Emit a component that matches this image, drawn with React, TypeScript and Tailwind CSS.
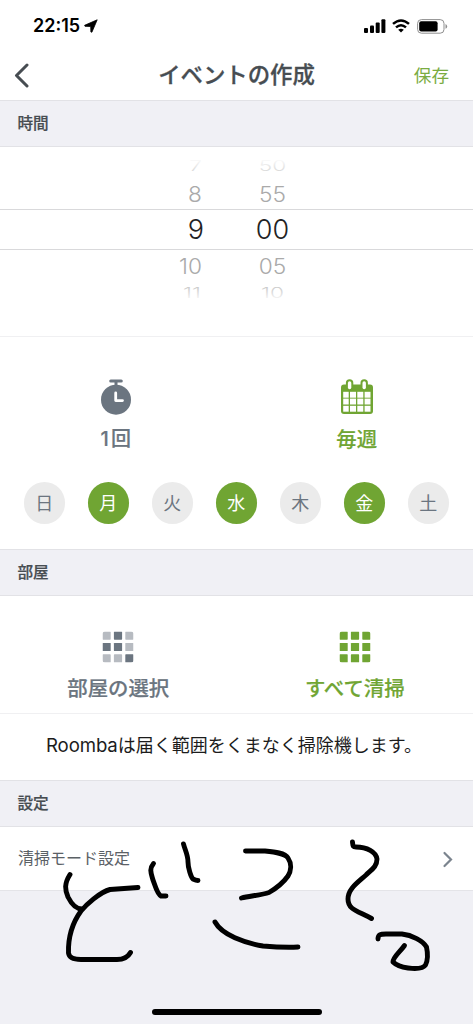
import clsx from 'clsx';

const hours = ['7', '8', '9', '10', '11'];
const minutes = ['50', '55', '00', '05', '10'];

const wheelRows = [
  { height: 'h-[26px]', text: 'text-[22px] text-[#c4c4c4] scale-y-[0.64] scale-x-[1.03]', fade: 'bg-linear-to-b from-white from-20% to-white/0 to-100%', hourPad: 'pr-[5px]' },
  { height: 'h-[30px]', text: 'text-[22px] text-[#aaaaaa] scale-y-[0.95] scale-x-[1.03]', fade: '', hourPad: 'pr-[5px]' },
  { height: 'h-[41px] border-y border-[#d9d9db]', text: 'text-[27px] text-[#222224]', fade: '', hourPad: 'pr-0' },
  { height: 'h-8', text: 'text-[22px] text-[#aaaaaa] scale-y-[0.95] scale-x-[1.03]', fade: '', hourPad: 'pr-[5px]' },
  { height: 'h-[22px]', text: 'text-[22px] text-[#b8b8b8] scale-y-[0.64] scale-x-[1.03]', fade: 'bg-linear-to-t from-white from-10% to-white/0 to-100%', hourPad: 'pr-[6px]' },
];

const days = [
  { label: '日', active: false },
  { label: '月', active: true },
  { label: '火', active: false },
  { label: '水', active: true },
  { label: '木', active: false },
  { label: '金', active: true },
  { label: '土', active: false },
];

function StatusBar() {
  return (
    <div className="h-[50px] flex items-center justify-between pl-[33px] pr-[25px] pt-[2px]">
      <div className="flex items-center gap-[4px]">
        <span className="font-['Inter'] font-semibold text-[18px] leading-none text-black">22:15</span>
        <svg width="14" height="14" viewBox="0 0 14 14" className="-mt-px">
          <path d="M13.2 0.8 L0.6 6.3 L1 7.3 L6.7 7.5 L6.9 13 L7.9 13.2 Z" fill="#000" stroke="#000" strokeWidth="0.8" strokeLinejoin="round" />
        </svg>
      </div>
      <div className="flex items-center">
        <svg width="22" height="14" viewBox="0 0 22 14">
          <rect x="0" y="9" width="4" height="5" rx="1" />
          <rect x="6" y="6.5" width="4" height="7.5" rx="1" />
          <rect x="11.7" y="3.5" width="4" height="10.5" rx="1" />
          <rect x="17.4" y="0.3" width="4" height="13.7" rx="1" />
        </svg>
        <svg width="18" height="14" viewBox="0 0 18 14" className="ml-[6px]" fill="none" stroke="#000" strokeWidth="2.5">
          <path d="M1 4.9 Q9 -2 17 4.9" />
          <path d="M4 8.4 Q9 4 14 8.4" />
          <path d="M9 13.6 L6.2 10.8 Q9 8.7 11.8 10.8 Z" fill="#000" stroke="none" />
        </svg>
        <svg width="31" height="15" viewBox="0 0 31 15" className="ml-[7px]">
          <rect x="0.6" y="0.6" width="26.4" height="13.6" rx="3.8" fill="none" stroke="#8f8f8f" />
          <rect x="2.2" y="2.2" width="18.4" height="10.4" rx="2" />
          <path d="M28.5 5 Q30.2 5.7 30.2 7.4 Q30.2 9.1 28.5 9.8 Z" fill="#8f8f8f" />
        </svg>
      </div>
    </div>
  );
}

function SectionTitle({ title }: { title: string }) {
  return (
    <div className="h-[47px] shrink-0 flex items-center bg-[#f0f0f5] border-y border-[#e2e2e6] pl-[17.5px] pb-[2px]">
      <h2 className="text-[15.6px] leading-none font-medium [-webkit-text-stroke:0.2px] text-[#474d52]">{title}</h2>
    </div>
  );
}

function TimePicker() {
  return (
    <div className="h-[190px] pt-[6px] border-b border-[#f0f0f2] font-['Inter'] font-light">
      {wheelRows.map((row, i) => (
        <div key={i} className={clsx('relative flex items-center', row.height)}>
          <div className={clsx('w-[204px] text-right leading-none', row.text, row.hourPad)}>{hours[i]}</div>
          <div className={clsx('ml-[44px] w-[49px] text-center leading-none', row.text)}>{minutes[i]}</div>
          {row.fade && <div className={clsx('absolute inset-0', row.fade)} />}
        </div>
      ))}
    </div>
  );
}

function StopwatchIcon() {
  return (
    <svg width="32" height="37" viewBox="0 0 32 37">
      <circle cx="16" cy="20.7" r="15" fill="#6b7580" />
      <path d="M10.7 2 H21.3 M16 2 V8" stroke="#6b7580" strokeWidth="3" strokeLinecap="round" />
      <path d="M15.7 14 V21.6 H22.5" fill="none" stroke="#fff" strokeWidth="2.8" strokeLinecap="round" strokeLinejoin="round" />
    </svg>
  );
}

function CalendarIcon() {
  return (
    <svg width="34" height="37" viewBox="0 0 34 37">
      <rect x="1" y="5.5" width="32" height="29.5" rx="3" fill="#70a533" />
      {[12.8, 19.6, 26.8].map((y) => (
        <g key={y} fill="#fff">
          <rect x="3.2" y={y} width="5.5" height="5.9" />
          <rect x="10" y={y} width="6" height="5.9" />
          <rect x="17.3" y={y} width="6" height="5.9" />
          <rect x="24.6" y={y} width="5.9" height="5.9" />
        </g>
      ))}
      {[9.6, 24.2].map((x) => (
        <g key={x}>
          <rect x={x - 3.7} y="0.2" width="7.4" height="11" rx="3.7" fill="#70a533" />
          <rect x={x - 1.7} y="2.2" width="3.4" height="8" rx="1.7" fill="#fff" />
        </g>
      ))}
    </svg>
  );
}

function RoomGridIcon({ colors }: { colors: string[] }) {
  return (
    <svg width="32" height="32" viewBox="0 0 32 32">
      <defs>
        <clipPath id="grid-corners">
          <rect x="0.5" y="0.5" width="31" height="31" rx="2.5" />
        </clipPath>
      </defs>
      <g clipPath="url(#grid-corners)">
        {colors.map((color, i) => (
          <rect key={i} x={0.5 + (i % 3) * 11.4} y={0.5 + Math.floor(i / 3) * 11.4} width="8.2" height="8.2" rx="0.6" fill={color} />
        ))}
      </g>
    </svg>
  );
}

// Pen strokes written over the lower part of the screen
function Handwriting() {
  return (
    <svg
      className="absolute left-0 top-[830px] pointer-events-none"
      width="473"
      height="150"
      viewBox="0 830 473 150"
      fill="none"
      stroke="#000"
      strokeWidth="4.9"
      strokeLinecap="round"
      strokeLinejoin="round"
    >
      <path d="M70 874.5 C64 884 65 890 68 897 C72 905 76 909 82 909" />
      <path d="M138 887.5 L110 889.5 C100 892 86 905 81 911 C73 922 68 936 68.5 953 C69 957 73 959.5 81 959.5 H117 C124 959.5 128 957 130.5 952.5" />
      <path d="M153.5 863.5 C149 869 151 873 153 880 C155 885 157 894 161 896 L166 896" />
      <path d="M183.5 844 C185 850 188 855 188 862 C188 868 191 877 193 879 C195 880 197 880.5 198 880.5" />
      <path d="M245.5 851 H265 C275 852 285 853 288 858 C292 864 291 871 288 876 C283 883 275 889 269 892.5 C262 895 249 896 241.5 898" />
      <path d="M215 922 C222 935 245 943 263 946 C275 947 286 947.5 298 947" />
      <path d="M352.5 842 C353 846 352.5 847 356 847 C367 847 376 852 377 859 C377 867 371 870 366 875 C357 883 348 889 348 899 C348 910 358 911 371.5 918.5" />
      <path d="M378 939 C378 934.5 380 934 386 934 H402 C412 935 423 941 426.5 947 C428 954 427.5 961 425.5 965 C423 969 416 969 408 968 C401 967 396 965 393 962 C393 957 400 952 404.5 945.5" />
    </svg>
  );
}

export default function App() {
  const dark = '#6b7580';
  const light = '#b7bbc1';
  const green = '#70a533';

  return (
    <div className="relative w-[473px] h-[1024px] overflow-hidden bg-[#f0f0f5] flex flex-col font-['Noto_Sans_CJK_JP',sans-serif]">
      <div className="h-[100px] shrink-0 bg-white">
        <StatusBar />
        <header className="h-[50px] grid grid-cols-[1fr_auto_1fr] items-center">
          <svg width="18" height="26" viewBox="0 0 18 26" className="ml-[13px]" fill="none" stroke="#474d52" strokeWidth="3" strokeLinecap="round" strokeLinejoin="round">
            <path d="M14 3 L3.5 13.5 L14 24" />
          </svg>
          <h1 className="text-[22.4px] leading-none font-medium [-webkit-text-stroke:0.3px] text-[#474d52] pb-[3px]">イベントの作成</h1>
          <button className="justify-self-end mr-6 pb-px text-[17.6px] leading-none text-[#7aac42]">保存</button>
        </header>
      </div>

      <SectionTitle title="時間" />
      <div className="h-[402px] shrink-0 bg-white">
        <TimePicker />
        <div className="h-[117px] grid grid-cols-2 pt-[42px]">
          <div className="flex flex-col items-center gap-[12px] pr-[5px]">
            <StopwatchIcon />
            <span className="text-[20px] leading-none font-medium [-webkit-text-stroke:0.2px] text-[#6b7580]">
              <span className="font-['Inter'] mr-[2px]">1</span>回
            </span>
          </div>
          <div className="flex flex-col items-center gap-[12px] pl-[4px]">
            <CalendarIcon />
            <span className="text-[20.4px] leading-none font-medium [-webkit-text-stroke:0.2px] text-[#70a533]">毎週</span>
          </div>
        </div>
        <div className="flex justify-between pl-[23.5px] pr-[24px] pt-[28px]">
          {days.map((day) => (
            <div
              key={day.label}
              className={clsx(
                'size-[41.5px] rounded-full flex items-center justify-center text-[18px] leading-none pb-[2px]',
                day.active ? 'bg-[#70a533] text-white' : 'bg-[#ebebeb] text-[#6b7580]'
              )}
            >
              {day.label}
            </div>
          ))}
        </div>
      </div>

      <SectionTitle title="部屋" />
      <div className="h-[184px] shrink-0 bg-white">
        <div className="h-[118px] grid grid-cols-2 pt-[35px] border-b border-[#f0f0f2]">
          <div className="flex flex-col items-center gap-[14px]">
            <RoomGridIcon colors={[light, dark, light, dark, dark, light, light, light, dark]} />
            <span className="text-[20.4px] leading-none font-medium [-webkit-text-stroke:0.2px] text-[#6b7580]">部屋の選択</span>
          </div>
          <div className="flex flex-col items-center gap-[14px]">
            <RoomGridIcon colors={Array(9).fill(green)} />
            <span className="text-[20.4px] leading-none font-medium [-webkit-text-stroke:0.2px] text-[#70a533]">すべて清掃</span>
          </div>
        </div>
        <p className="h-[63px] flex items-center pl-[46px] text-[18px] leading-none text-[#1c1c1c] whitespace-nowrap">
          <span className="font-['Inter'] text-[18.6px] tracking-[-0.1px]">Roomba</span>
          <span className="pb-[3px]">は届く範囲をくまなく掃除機します。</span>
        </p>
      </div>

      <SectionTitle title="設定" />
      <div className="h-[64px] shrink-0 bg-white border-b border-[#e4e4e8] flex items-center justify-between pl-[18px] pr-[19px]">
        <span className="text-[16px] leading-none text-[#5b6166] pb-[3px]">清掃モード設定</span>
        <svg width="12" height="18" viewBox="0 0 12 18" fill="none" stroke="#7b848e" strokeWidth="2.2" strokeLinecap="round">
          <path d="M2.5 3 L9 9.5 L2.5 16" />
        </svg>
      </div>

      <div className="flex-1 flex items-end justify-center pb-[9px]">
        <div className="w-[170px] h-[6px] rounded-full bg-black" />
      </div>

      <Handwriting />
    </div>
  );
}
